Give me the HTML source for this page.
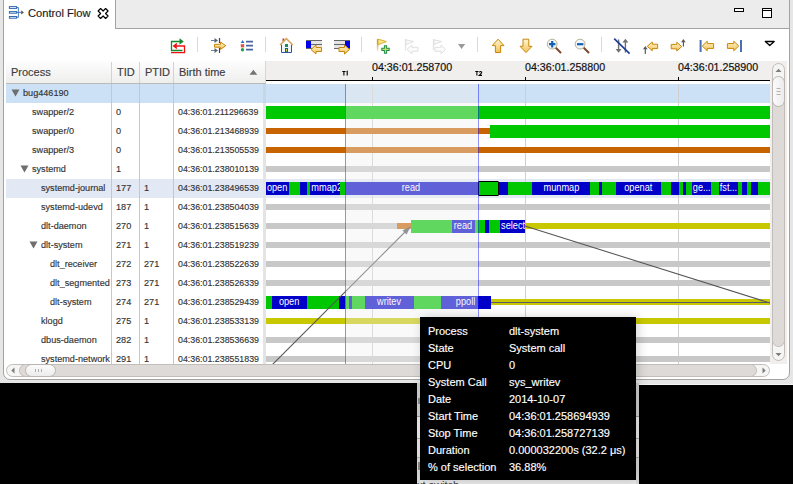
<!DOCTYPE html><html><head><meta charset="utf-8"><style>
html,body{margin:0;padding:0;}
body{width:793px;height:484px;background:#000;position:relative;overflow:hidden;font-family:"Liberation Sans", sans-serif;}
div{position:absolute;box-sizing:border-box;}
.t{white-space:nowrap;line-height:1;}
svg{position:absolute;}
.tc{font-size:9.6px;color:#333;transform-origin:0 0;-webkit-text-stroke:0.15px #333;}
</style></head><body>
<div style="left:0px;top:0px;width:793px;height:383px;background:#e6e6e6;"></div>
<div style="left:417px;top:383px;width:376px;height:2px;background:#e6e6e6;"></div>
<div style="left:639px;top:384px;width:154px;height:1px;background:#f4f4f4;"></div>
<div style="left:3px;top:-4px;width:787px;height:384px;background:#fff;border:1px solid #a3a3a3;border-radius:4px 4px 7px 7px;"></div>
<div style="left:115px;top:-4px;width:675px;height:33px;background:#ececec;border:1px solid #a3a3a3;border-left:1px solid #a3a3a3;border-radius:0 4px 0 0;"></div>
<div style="left:3px;top:-4px;width:113px;height:33px;background:#fff;border:1px solid #a3a3a3;border-bottom:none;border-radius:4px 4px 0 0;"></div>
<svg style="left:8px;top:5px" width="18" height="15" viewBox="0 0 18 15">
<rect x="1.4" y="1.6" width="7.2" height="1.8" fill="#fff" stroke="#2f68b0" stroke-width="1"/>
<rect x="1.4" y="6.6" width="7.2" height="1.6" fill="#fff" stroke="#2f68b0" stroke-width="1"/>
<rect x="1.4" y="11.5" width="7.2" height="1.7" fill="#fff" stroke="#2f68b0" stroke-width="1"/>
<path d="M9 2.5H10.4V12.3H9M9 7.4H13.5" fill="none" stroke="#3a6fb5" stroke-width="0.9"/>
<path d="M13.2 5.3L15.9 7.4L13.2 9.5Z" fill="#555"/>
</svg>
<div class="t" style="left:28px;top:8px;font-size:11.5px;color:#1a1a1a;transform:scaleX(0.97);transform-origin:0 0;-webkit-text-stroke:0.15px #1a1a1a;">Control Flow</div>
<svg style="left:97px;top:7px" width="13" height="13" viewBox="0 -0.5 13 13">
<path d="M8.61 1.01L11.09 3.49L8.57 6.00L11.09 8.51L8.61 10.99L6.10 8.47L3.59 10.99L1.11 8.51L3.63 6.00L1.11 3.49L3.59 1.01L6.10 3.53Z" fill="#fff" stroke="#000" stroke-width="1.15" stroke-linejoin="round"/>
</svg>
<div style="left:734px;top:8px;width:10px;height:4px;border:1.5px solid #000;background:#fff;border-radius:0.5px;"></div>
<div style="left:762px;top:8px;width:10px;height:10px;border:1.5px solid #000;background:#fff;border-radius:0.5px;"></div>
<div style="left:763px;top:10px;width:8px;height:1px;background:#000;"></div>
<div style="left:6px;top:61px;width:260px;height:22px;background:linear-gradient(#fdfdfd,#eeeeed);"></div>
<div style="left:6px;top:83px;width:260px;height:1px;background:#bcbab7;"></div>
<div style="left:265px;top:61px;width:1px;height:22px;background:#d8d6d3;"></div>
<div style="left:111px;top:62px;width:1px;height:21px;background:#d4d2cf;"></div>
<div style="left:139px;top:62px;width:1px;height:21px;background:#d4d2cf;"></div>
<div style="left:173px;top:62px;width:1px;height:21px;background:#d4d2cf;"></div>
<div class="t" style="left:11px;top:67px;font-size:11px;color:#3c3c3c;-webkit-text-stroke:0.15px #3c3c3c;">Process</div>
<div class="t" style="left:117px;top:67px;font-size:11px;color:#3c3c3c;-webkit-text-stroke:0.15px #3c3c3c;">TID</div>
<div class="t" style="left:145px;top:67px;font-size:11px;color:#3c3c3c;-webkit-text-stroke:0.15px #3c3c3c;">PTID</div>
<div class="t" style="left:179px;top:67px;font-size:11px;color:#3c3c3c;-webkit-text-stroke:0.15px #3c3c3c;">Birth time</div>
<svg style="left:248px;top:68px" width="11" height="8" viewBox="248 68 11 8"><path d="M249.5 74.8L253.4 69.8L257.3 74.8Z" fill="#747474"/></svg>
<div style="left:6px;top:84px;width:257px;height:280px;overflow:hidden;">
<div style="left:0px;top:0px;width:257px;height:19px;background:#cce1f6;"></div>
<div style="left:0px;top:95px;width:257px;height:19px;background:#e2e8f4;"></div>
<div style="left:105px;top:0px;width:1px;height:280px;background:#c9c7c4;"></div>
<div style="left:133px;top:0px;width:1px;height:280px;background:#c9c7c4;"></div>
<div style="left:167px;top:0px;width:1px;height:280px;background:#c9c7c4;"></div>
<svg style="left:5px;top:5px" width="9" height="8" viewBox="0 0 9 8"><path d="M0.5 0.5H8.5L4.5 7.5Z" fill="#6e6e6e"/></svg>
<div style="left:17px;top:0px;width:88px;height:19px;overflow:hidden;"><div class="t tc" style="left:0;top:3.7px;transform:scaleX(0.95);">bug446190</div></div>
<div style="left:26px;top:19px;width:79px;height:19px;overflow:hidden;"><div class="t tc" style="left:0;top:3.7px;transform:scaleX(0.95);">swapper/2</div></div>
<div class="t tc" style="left:110px;top:22.7px;transform:scaleX(0.95);">0</div>
<div class="t tc" style="left:172px;top:22.7px;transform:scaleX(0.92);">04:36:01.211296639</div>
<div style="left:26px;top:38px;width:79px;height:19px;overflow:hidden;"><div class="t tc" style="left:0;top:3.7px;transform:scaleX(0.95);">swapper/0</div></div>
<div class="t tc" style="left:110px;top:41.7px;transform:scaleX(0.95);">0</div>
<div class="t tc" style="left:172px;top:41.7px;transform:scaleX(0.92);">04:36:01.213468939</div>
<div style="left:26px;top:57px;width:79px;height:19px;overflow:hidden;"><div class="t tc" style="left:0;top:3.7px;transform:scaleX(0.95);">swapper/3</div></div>
<div class="t tc" style="left:110px;top:60.7px;transform:scaleX(0.95);">0</div>
<div class="t tc" style="left:172px;top:60.7px;transform:scaleX(0.92);">04:36:01.213505539</div>
<svg style="left:14px;top:81px" width="9" height="8" viewBox="0 0 9 8"><path d="M0.5 0.5H8.5L4.5 7.5Z" fill="#6e6e6e"/></svg>
<div style="left:26px;top:76px;width:79px;height:19px;overflow:hidden;"><div class="t tc" style="left:0;top:3.7px;transform:scaleX(0.95);">systemd</div></div>
<div class="t tc" style="left:110px;top:79.7px;transform:scaleX(0.95);">1</div>
<div class="t tc" style="left:172px;top:79.7px;transform:scaleX(0.92);">04:36:01.238010139</div>
<div style="left:35px;top:95px;width:70px;height:19px;overflow:hidden;"><div class="t tc" style="left:0;top:3.7px;transform:scaleX(0.95);">systemd-journal</div></div>
<div class="t tc" style="left:110px;top:98.7px;transform:scaleX(0.95);">177</div>
<div class="t tc" style="left:138px;top:98.7px;transform:scaleX(0.95);">1</div>
<div class="t tc" style="left:172px;top:98.7px;transform:scaleX(0.92);">04:36:01.238496539</div>
<div style="left:35px;top:114px;width:70px;height:19px;overflow:hidden;"><div class="t tc" style="left:0;top:3.7px;transform:scaleX(0.95);">systemd-udevd</div></div>
<div class="t tc" style="left:110px;top:117.7px;transform:scaleX(0.95);">187</div>
<div class="t tc" style="left:138px;top:117.7px;transform:scaleX(0.95);">1</div>
<div class="t tc" style="left:172px;top:117.7px;transform:scaleX(0.92);">04:36:01.238504039</div>
<div style="left:35px;top:133px;width:70px;height:19px;overflow:hidden;"><div class="t tc" style="left:0;top:3.7px;transform:scaleX(0.95);">dlt-daemon</div></div>
<div class="t tc" style="left:110px;top:136.7px;transform:scaleX(0.95);">270</div>
<div class="t tc" style="left:138px;top:136.7px;transform:scaleX(0.95);">1</div>
<div class="t tc" style="left:172px;top:136.7px;transform:scaleX(0.92);">04:36:01.238515639</div>
<svg style="left:23px;top:157px" width="9" height="8" viewBox="0 0 9 8"><path d="M0.5 0.5H8.5L4.5 7.5Z" fill="#6e6e6e"/></svg>
<div style="left:35px;top:152px;width:70px;height:19px;overflow:hidden;"><div class="t tc" style="left:0;top:3.7px;transform:scaleX(0.95);">dlt-system</div></div>
<div class="t tc" style="left:110px;top:155.7px;transform:scaleX(0.95);">271</div>
<div class="t tc" style="left:138px;top:155.7px;transform:scaleX(0.95);">1</div>
<div class="t tc" style="left:172px;top:155.7px;transform:scaleX(0.92);">04:36:01.238519239</div>
<div style="left:44px;top:171px;width:61px;height:19px;overflow:hidden;"><div class="t tc" style="left:0;top:3.7px;transform:scaleX(0.95);">dlt_receiver</div></div>
<div class="t tc" style="left:110px;top:174.7px;transform:scaleX(0.95);">272</div>
<div class="t tc" style="left:138px;top:174.7px;transform:scaleX(0.95);">271</div>
<div class="t tc" style="left:172px;top:174.7px;transform:scaleX(0.92);">04:36:01.238522639</div>
<div style="left:44px;top:190px;width:61px;height:19px;overflow:hidden;"><div class="t tc" style="left:0;top:3.7px;transform:scaleX(0.95);">dlt_segmented</div></div>
<div class="t tc" style="left:110px;top:193.7px;transform:scaleX(0.95);">273</div>
<div class="t tc" style="left:138px;top:193.7px;transform:scaleX(0.95);">271</div>
<div class="t tc" style="left:172px;top:193.7px;transform:scaleX(0.92);">04:36:01.238526339</div>
<div style="left:44px;top:209px;width:61px;height:19px;overflow:hidden;"><div class="t tc" style="left:0;top:3.7px;transform:scaleX(0.95);">dlt-system</div></div>
<div class="t tc" style="left:110px;top:212.7px;transform:scaleX(0.95);">274</div>
<div class="t tc" style="left:138px;top:212.7px;transform:scaleX(0.95);">271</div>
<div class="t tc" style="left:172px;top:212.7px;transform:scaleX(0.92);">04:36:01.238529439</div>
<div style="left:35px;top:228px;width:70px;height:19px;overflow:hidden;"><div class="t tc" style="left:0;top:3.7px;transform:scaleX(0.95);">klogd</div></div>
<div class="t tc" style="left:110px;top:231.7px;transform:scaleX(0.95);">275</div>
<div class="t tc" style="left:138px;top:231.7px;transform:scaleX(0.95);">1</div>
<div class="t tc" style="left:172px;top:231.7px;transform:scaleX(0.92);">04:36:01.238533139</div>
<div style="left:35px;top:247px;width:70px;height:19px;overflow:hidden;"><div class="t tc" style="left:0;top:3.7px;transform:scaleX(0.95);">dbus-daemon</div></div>
<div class="t tc" style="left:110px;top:250.7px;transform:scaleX(0.95);">282</div>
<div class="t tc" style="left:138px;top:250.7px;transform:scaleX(0.95);">1</div>
<div class="t tc" style="left:172px;top:250.7px;transform:scaleX(0.92);">04:36:01.238536639</div>
<div style="left:35px;top:266px;width:70px;height:19px;overflow:hidden;"><div class="t tc" style="left:0;top:3.7px;transform:scaleX(0.95);">systemd-network</div></div>
<div class="t tc" style="left:110px;top:269.7px;transform:scaleX(0.95);">291</div>
<div class="t tc" style="left:138px;top:269.7px;transform:scaleX(0.95);">1</div>
<div class="t tc" style="left:172px;top:269.7px;transform:scaleX(0.92);">04:36:01.238551839</div>
</div>
<div style="left:263px;top:84px;width:3px;height:280px;background:#e4e4e4;"></div>
<div style="left:263px;top:84px;width:3px;height:19px;background:#c6d7e8;"></div>
<svg style="left:0;top:0" width="793" height="60" viewBox="0 0 793 60">
<defs>
<linearGradient id="og" x1="0" y1="0" x2="0" y2="1"><stop offset="0" stop-color="#fff6cf"/><stop offset="1" stop-color="#f2c25a"/></linearGradient>
<linearGradient id="pole" gradientUnits="userSpaceOnUse" x1="0" y1="39" x2="0" y2="51"><stop offset="0" stop-color="#b98a20"/><stop offset="1" stop-color="#efe2b8"/></linearGradient>
<linearGradient id="og2" x1="0" y1="0" x2="1" y2="0"><stop offset="0" stop-color="#fff6cf"/><stop offset="1" stop-color="#f2c25a"/></linearGradient>
</defs>
<g fill="none" stroke="#d9d9d9" stroke-width="1">
<path d="M197.5 37V52M265.5 37V52M361.5 37V52M477.5 37V52M601.5 37V52"/>
</g>
<!-- sync -->
<path d="M182.5 50.5H171.5V41.5H180" fill="none" stroke="#168a2a" stroke-width="1.3"/>
<path d="M179.5 38.3L183.8 41.5L179.5 44.7Z" fill="#168a2a"/>
<path d="M171 52.6H184.5V46H176.5" fill="none" stroke="#f01010" stroke-width="1.3"/>
<path d="M176.8 42.8L172.6 46L176.8 49.2Z" fill="#f01010"/>
<!-- collapse -->
<path d="M211 40.5H216M211 50.5H216" stroke="#5a8ab5" stroke-width="1.2"/>
<path d="M214.5 38L218 40.5L214.5 43Z M214.5 48L218 50.5L214.5 53Z" fill="#5c6470"/>
<path d="M219.5 38V43M219.5 48V53" stroke="#3a4a66" stroke-width="1.2"/>
<path d="M214.5 44.3H220.5V42L225.8 45.7L220.5 49.4V47.2H214.5Z" fill="url(#og)" stroke="#c7860b" stroke-width="1" stroke-linejoin="round"/>
<!-- list -->
<path d="M242.6 40L244.4 43H240.8Z" fill="#2a6ac0"/>
<rect x="240.8" y="44.2" width="3.4" height="3.2" fill="#e05040"/>
<circle cx="242.5" cy="49.8" r="1.7" fill="#2a9a50"/>
<path d="M246 41.6H253M246 45.6H253M246 49.6H253" stroke="#4a64a0" stroke-width="1.6"/>
<!-- home -->
<rect x="282.5" y="38.5" width="1.8" height="3" fill="#c04030"/>
<path d="M281.5 44.5V52.5H291.5V44.5" fill="#eef4fc" stroke="#2d56a8" stroke-width="1"/>
<path d="M280 45L286.4 38.6L292.8 45" fill="none" stroke="#d8a860" stroke-width="1.6"/>
<rect x="285" y="44" width="3" height="3" fill="#1a8a50"/>
<rect x="285" y="48" width="3" height="4.6" fill="#1a5a90"/>
<rect x="286" y="49" width="1" height="2.5" fill="#d0e020"/>
<!-- prev event -->
<rect x="306" y="40" width="16" height="9" fill="#e4e4e4"/>
<path d="M306 40.5H322M306 48.5H322M311 44.5H322" stroke="#666" stroke-width="1"/>
<rect x="306" y="41" width="5" height="7" fill="#0000e8"/>
<path d="M311 49.5L316 45V47.5H321.5V51.5H316V54Z" fill="url(#og)" stroke="#c7860b" stroke-width="1" stroke-linejoin="round"/>
<!-- next event -->
<rect x="334" y="40" width="16" height="9" fill="#e4e4e4"/>
<path d="M334 40.5H350M334 48.5H350M334 44.5H345" stroke="#666" stroke-width="1"/>
<rect x="345" y="41" width="5" height="7" fill="#0000e8"/>
<path d="M349.5 49.5L344.5 45V47.5H339V51.5H344.5V54Z" fill="url(#og)" stroke="#c7860b" stroke-width="1" stroke-linejoin="round"/>
<!-- add bookmark -->
<path d="M377.6 39.2V50.8" stroke="url(#pole)" stroke-width="1.5"/>
<path d="M377.8 39.3L382 40.2L386.3 41.6L382.5 43L378.2 44.6Z" fill="#fbea8a" stroke="#d4a21c" stroke-width="0.9" stroke-linejoin="round"/>
<path d="M385.5 45.3V53.7M381.3 49.4H389.7" stroke="#1f8a4c" stroke-width="3.2"/>
<path d="M385.5 46.3V52.7M382.3 49.4H388.7" stroke="#c6e064" stroke-width="1.3"/>
<!-- prev bookmark (disabled) -->
<path d="M405.5 39V50.5" stroke="#e4e4e4" stroke-width="1.3"/>
<path d="M406 39.8L413.5 41.5L406 44.5Z" fill="#fbfbfb" stroke="#e0e0e0" stroke-width="1" stroke-linejoin="round"/>
<path d="M407 49.3L412 45V47.3H418V51.3H412V53.8Z" fill="#fbfbfb" stroke="#e0e0e0" stroke-width="1" stroke-linejoin="round"/>
<!-- next bookmark (disabled) -->
<path d="M433.5 39V50.5" stroke="#e4e4e4" stroke-width="1.3"/>
<path d="M434 39.8L441.5 41.5L434 44.5Z" fill="#fbfbfb" stroke="#e0e0e0" stroke-width="1" stroke-linejoin="round"/>
<path d="M445.5 49.3L441 45V47.3H435V51.3H441V53.8Z" fill="#fbfbfb" stroke="#e0e0e0" stroke-width="1" stroke-linejoin="round"/>
<path d="M458 44H465.2L461.6 49Z" fill="#9a9a9a"/>
<!-- up / down -->
<path d="M498.1 39.2L504 45.6H500.6V52.5H495.4V45.6H492.2Z" fill="url(#og)" stroke="#c7860b" stroke-width="1" stroke-linejoin="round"/>
<path d="M523 39.2H528.8V46.3H532L526 52.6L520 46.3H523Z" fill="url(#og)" stroke="#c7860b" stroke-width="1" stroke-linejoin="round"/>
<!-- zoom in / out -->
<path d="M556 48L560.5 52.5" stroke="#7a4a30" stroke-width="2" stroke-linecap="round"/>
<circle cx="552.2" cy="44.1" r="4.9" fill="#f4f6fa" stroke="#b8b090" stroke-width="1"/>
<path d="M549 44.2H555.4M552.2 41V47.4" stroke="#1060b8" stroke-width="2.2"/>
<path d="M584 48L588.5 52.5" stroke="#7a4a30" stroke-width="2" stroke-linecap="round"/>
<circle cx="580.1" cy="44.1" r="4.9" fill="#f4f6fa" stroke="#b8b090" stroke-width="1"/>
<path d="M577 44.2H583.4" stroke="#1060b8" stroke-width="2.2"/>
<!-- hide arrows -->
<path d="M618.6 39.5V51M625.4 40.5V52.5" stroke="#707070" stroke-width="1.4"/>
<path d="M615.6 49L621.6 49L618.6 52.8Z M622.4 42.5L628.4 42.5L625.4 38.8Z" fill="#707070"/>
<path d="M614.2 38.6L629.6 53.6" stroke="#1a3a9a" stroke-width="1.6"/>
<!-- follow back -->
<path d="M645.3 48V54" stroke="#5a5a5a" stroke-width="1.2"/>
<path d="M643 49.2H647.6L645.3 46Z" fill="#5a5a5a"/>
<path d="M647.2 46.3L652.3 42V44.2H657.6V48.6H652.3V50.7Z" fill="url(#og)" stroke="#c7860b" stroke-width="1" stroke-linejoin="round"/>
<!-- follow fwd -->
<path d="M683.4 41V46.5" stroke="#5a5a5a" stroke-width="1.2"/>
<path d="M681.1 42.2H685.7L683.4 39Z" fill="#5a5a5a"/>
<path d="M681.7 46.6L676.8 42.2V44.4H671.2V48.8H676.8V51Z" fill="url(#og)" stroke="#c7860b" stroke-width="1" stroke-linejoin="round"/>
<!-- prev state -->
<path d="M700.6 40V52" stroke="#4a72b0" stroke-width="2"/>
<path d="M702.3 46L707.2 41.2V43.6H713.6V48.4H707.2V50.8Z" fill="url(#og)" stroke="#c7860b" stroke-width="1" stroke-linejoin="round"/>
<!-- next state -->
<path d="M741 40V52" stroke="#4a72b0" stroke-width="2"/>
<path d="M738.7 46L733.8 41.2V43.6H727.4V48.4H733.8V50.8Z" fill="url(#og)" stroke="#c7860b" stroke-width="1" stroke-linejoin="round"/>
<!-- view menu -->
<path d="M765.3 41.5H774.2L769.75 45.6Z" fill="#fff" stroke="#000" stroke-width="1.3" stroke-linejoin="round"/>
</svg>
<div style="left:266px;top:61px;width:521px;height:20px;background:#f0efee;"></div>
<div style="left:266px;top:80px;width:504px;height:1px;background:#000;"></div>
<div style="left:266px;top:81px;width:504px;height:3px;background:#fff;"></div>
<div style="left:372px;top:77px;width:1px;height:3px;background:#000;"></div>
<div style="left:525px;top:77px;width:1px;height:3px;background:#000;"></div>
<div style="left:678px;top:77px;width:1px;height:3px;background:#000;"></div>
<div class="t" style="left:372px;top:62px;font-size:11px;color:#111;transform:scaleX(0.97);transform-origin:0 0;-webkit-text-stroke:0.2px #111;">04:36:01.258700</div>
<div class="t" style="left:525px;top:62px;font-size:11px;color:#111;transform:scaleX(0.97);transform-origin:0 0;-webkit-text-stroke:0.2px #111;">04:36:01.258800</div>
<div class="t" style="left:678px;top:62px;font-size:11px;color:#111;transform:scaleX(0.97);transform-origin:0 0;-webkit-text-stroke:0.2px #111;">04:36:01.258900</div>
<svg style="left:340px;top:70px" width="150" height="8" viewBox="340 70 150 8"><path d="M342.3 71.5H345.5M343.9 71.5V75.5M346.5 72.2L347.2 71.5V75.5" fill="none" stroke="#000" stroke-width="1.1"/><path d="M475.3 71.5H478.5M476.9 71.5V75.5M479.3 72.3Q480.5 70.8 481.7 72.2Q481.7 73.2 479.3 75.4H482" fill="none" stroke="#000" stroke-width="1.1"/></svg>
<div style="left:770px;top:81px;width:17px;height:283px;background:#f0efee;"></div>
<div style="left:266px;top:84px;width:504px;height:280px;overflow:hidden;background:#fff;">
<div style="left:0px;top:0px;width:504px;height:19px;background:#cce1f6;"></div>
<div style="left:0px;top:95px;width:504px;height:19px;background:#e2e8f4;"></div>
<div style="left:106px;top:0px;width:1px;height:280px;background:#cfcfcf;"></div>
<div style="left:259px;top:0px;width:1px;height:280px;background:#cfcfcf;"></div>
<div style="left:412px;top:0px;width:1px;height:280px;background:#cfcfcf;"></div>
<div style="left:0px;top:22px;width:504px;height:13px;background:#00c800;"></div>
<div style="left:0px;top:44px;width:224px;height:6px;background:#c86400;"></div>
<div style="left:224px;top:41px;width:280px;height:13px;background:#00c800;"></div>
<div style="left:0px;top:63px;width:504px;height:6px;background:#c86400;"></div>
<div style="left:0px;top:82px;width:504px;height:6px;background:#c8c8c8;"></div>
<div style="left:0px;top:98px;width:23px;height:13px;background:#0000c8;"></div>
<div style="left:23px;top:98px;width:11px;height:13px;background:#00c800;"></div>
<div style="left:34px;top:98px;width:7px;height:13px;background:#0000c8;"></div>
<div style="left:41px;top:98px;width:3px;height:13px;background:#00c800;"></div>
<div style="left:44px;top:98px;width:30px;height:13px;background:#0000c8;"></div>
<div style="left:74px;top:98px;width:5px;height:13px;background:#00c800;"></div>
<div style="left:79px;top:98px;width:133px;height:13px;background:#0000c8;"></div>
<div style="left:212px;top:98px;width:20px;height:13px;background:#00c800;"></div>
<div style="left:232px;top:98px;width:10px;height:13px;background:#0000c8;"></div>
<div style="left:242px;top:98px;width:24px;height:13px;background:#00c800;"></div>
<div style="left:266px;top:98px;width:58px;height:13px;background:#0000c8;"></div>
<div style="left:324px;top:98px;width:9px;height:13px;background:#00c800;"></div>
<div style="left:333px;top:98px;width:3px;height:13px;background:#0000c8;"></div>
<div style="left:336px;top:98px;width:14px;height:13px;background:#00c800;"></div>
<div style="left:350px;top:98px;width:45px;height:13px;background:#0000c8;"></div>
<div style="left:395px;top:98px;width:10px;height:13px;background:#00c800;"></div>
<div style="left:405px;top:98px;width:8px;height:13px;background:#0000c8;"></div>
<div style="left:413px;top:98px;width:4px;height:13px;background:#00c800;"></div>
<div style="left:417px;top:98px;width:3px;height:13px;background:#0000c8;"></div>
<div style="left:420px;top:98px;width:6px;height:13px;background:#00c800;"></div>
<div style="left:426px;top:98px;width:19px;height:13px;background:#0000c8;"></div>
<div style="left:445px;top:98px;width:8px;height:13px;background:#00c800;"></div>
<div style="left:453px;top:98px;width:19px;height:13px;background:#0000c8;"></div>
<div style="left:472px;top:98px;width:4px;height:13px;background:#00c800;"></div>
<div style="left:476px;top:98px;width:5px;height:13px;background:#0000c8;"></div>
<div style="left:481px;top:98px;width:4px;height:13px;background:#00c800;"></div>
<div style="left:485px;top:98px;width:7px;height:13px;background:#0000c8;"></div>
<div style="left:492px;top:98px;width:12px;height:13px;background:#00c800;"></div>
<div style="left:0px;top:120px;width:504px;height:6px;background:#c8c8c8;"></div>
<div style="left:0px;top:139px;width:131px;height:6px;background:#c8c8c8;"></div>
<div style="left:131px;top:139px;width:14px;height:6px;background:#c86400;"></div>
<div style="left:145px;top:136px;width:41px;height:13px;background:#00c800;"></div>
<div style="left:186px;top:136px;width:23px;height:13px;background:#0000c8;"></div>
<div style="left:209px;top:136px;width:10px;height:13px;background:#00c800;"></div>
<div style="left:219px;top:136px;width:4px;height:13px;background:#0000c8;"></div>
<div style="left:223px;top:136px;width:11px;height:13px;background:#00c800;"></div>
<div style="left:234px;top:136px;width:25px;height:13px;background:#0000c8;"></div>
<div style="left:259px;top:139px;width:245px;height:6px;background:#c8c800;"></div>
<div style="left:0px;top:158px;width:504px;height:6px;background:#c8c8c8;"></div>
<div style="left:0px;top:177px;width:504px;height:6px;background:#c8c8c8;"></div>
<div style="left:0px;top:196px;width:504px;height:6px;background:#c8c8c8;"></div>
<div style="left:0px;top:212px;width:6px;height:13px;background:#00c800;"></div>
<div style="left:6px;top:212px;width:35px;height:13px;background:#0000c8;"></div>
<div style="left:41px;top:212px;width:32px;height:13px;background:#00c800;"></div>
<div style="left:73px;top:212px;width:10px;height:13px;background:#0000c8;"></div>
<div style="left:83px;top:212px;width:3px;height:13px;background:#0000c8;"></div>
<div style="left:79px;top:212px;width:4px;height:13px;background:#00c800;"></div>
<div style="left:86px;top:212px;width:13px;height:13px;background:#00c800;"></div>
<div style="left:99px;top:212px;width:49px;height:13px;background:#0000c8;"></div>
<div style="left:148px;top:212px;width:27px;height:13px;background:#00c800;"></div>
<div style="left:175px;top:212px;width:50px;height:13px;background:#0000c8;"></div>
<div style="left:225px;top:215px;width:279px;height:6px;background:#c8c800;"></div>
<div style="left:0px;top:234px;width:504px;height:6px;background:#c8c800;"></div>
<div style="left:0px;top:253px;width:504px;height:6px;background:#c8c8c8;"></div>
<div style="left:0px;top:272px;width:504px;height:6px;background:#c8c8c8;"></div>
<div style="left:0px;top:98px;width:23px;height:13px;overflow:hidden;text-align:center;font-size:10px;line-height:12px;white-space:nowrap;"><span style="display:inline-block;color:#fff;transform:scaleX(0.92);">open</span></div>
<div style="left:44px;top:98px;width:30px;height:13px;overflow:hidden;text-align:center;font-size:10px;line-height:12px;white-space:nowrap;"><span style="display:inline-block;color:#fff;transform:scaleX(0.92);">mmap2</span></div>
<div style="left:79px;top:98px;width:133px;height:13px;overflow:hidden;text-align:center;font-size:10px;line-height:12px;white-space:nowrap;"><span style="display:inline-block;color:#fff;transform:scaleX(0.92);">read</span></div>
<div style="left:266px;top:98px;width:58px;height:13px;overflow:hidden;text-align:center;font-size:10px;line-height:12px;white-space:nowrap;"><span style="display:inline-block;color:#fff;transform:scaleX(0.92);">munmap</span></div>
<div style="left:350px;top:98px;width:45px;height:13px;overflow:hidden;text-align:center;font-size:10px;line-height:12px;white-space:nowrap;"><span style="display:inline-block;color:#fff;transform:scaleX(0.92);">openat</span></div>
<div style="left:426px;top:98px;width:19px;height:13px;overflow:hidden;text-align:center;font-size:10px;line-height:12px;white-space:nowrap;"><span style="display:inline-block;color:#fff;transform:scaleX(0.92);">ge...</span></div>
<div style="left:453px;top:98px;width:19px;height:13px;overflow:hidden;text-align:center;font-size:10px;line-height:12px;white-space:nowrap;"><span style="display:inline-block;color:#fff;transform:scaleX(0.92);">fst...</span></div>
<div style="left:186px;top:136px;width:23px;height:13px;overflow:hidden;text-align:center;font-size:10px;line-height:12px;white-space:nowrap;"><span style="display:inline-block;color:#fff;transform:scaleX(0.92);">read</span></div>
<div style="left:234px;top:136px;width:25px;height:13px;overflow:hidden;text-align:center;font-size:10px;line-height:12px;white-space:nowrap;"><span style="display:inline-block;color:#fff;transform:scaleX(0.92);">select</span></div>
<div style="left:6px;top:212px;width:35px;height:13px;overflow:hidden;text-align:center;font-size:10px;line-height:12px;white-space:nowrap;"><span style="display:inline-block;color:#fff;transform:scaleX(0.92);">open</span></div>
<div style="left:99px;top:212px;width:49px;height:13px;overflow:hidden;text-align:center;font-size:10px;line-height:12px;white-space:nowrap;"><span style="display:inline-block;color:#fff;transform:scaleX(0.92);">writev</span></div>
<div style="left:175px;top:212px;width:50px;height:13px;overflow:hidden;text-align:center;font-size:10px;line-height:12px;white-space:nowrap;"><span style="display:inline-block;color:#fff;transform:scaleX(0.92);">ppoll</span></div>
<svg style="left:0;top:0" width="504" height="280" viewBox="266 84 504 280"><path d="M262 375L408 229" stroke="#555" stroke-width="1.1"/><path d="M411 226L402.5 230.5L406.5 234.5Z" fill="#555"/><path d="M525 226L780 306.2" stroke="#555" stroke-width="1.05"/><path d="M491 302.5H780" stroke="#5a5a66" stroke-width="1.05"/></svg>
<div style="left:212px;top:97px;width:21px;height:15px;background:transparent;border:1.2px solid #000;border-radius:1px;"></div>
<div style="left:79px;top:0px;width:133px;height:280px;background:rgba(240,240,240,0.4);"></div>
<div style="left:79px;top:0px;width:1px;height:280px;background:rgba(20,20,255,0.47);"></div>
<div style="left:212px;top:0px;width:1px;height:280px;background:rgba(20,20,255,0.47);"></div>
</div>
<div style="left:772px;top:63px;width:13px;height:298px;background:#f5f5f4;border:1px solid #c2bdb9;border-radius:6.5px;"></div>
<div style="left:772px;top:80px;width:13px;height:267px;background:#dddad7;border:1px solid #c2bdb9;border-radius:6.5px;"></div>
<div style="left:772px;top:76px;width:13px;height:31px;background:linear-gradient(90deg,#fbfbfb,#ececec);border:1px solid #bab5b1;border-radius:6.5px;"></div>
<svg style="left:770px;top:60px" width="20" height="305" viewBox="770 60 20 305"><path d="M775.5 72H781.5L778.5 68.8Z" fill="#7c7c7c"/><path d="M775.5 353H781.5L778.5 356.2Z" fill="#7c7c7c"/><path d="M776.5 88.5H780.5M776.5 91.5H780.5M776.5 94.5H780.5" stroke="#b0aca8" stroke-width="0.9"/></svg>
<div style="left:6px;top:364px;width:764px;height:13px;background:#f5f5f4;border:1px solid #c2bdb9;border-radius:6.5px;"></div>
<div style="left:19px;top:364px;width:738px;height:13px;background:#dddad7;border:1px solid #c2bdb9;border-radius:6.5px;"></div>
<div style="left:25px;top:364px;width:31px;height:13px;background:linear-gradient(#fbfbfb,#ececec);border:1px solid #bab5b1;border-radius:6.5px;"></div>
<svg style="left:0px;top:360px" width="793" height="20" viewBox="0 360 793 20"><path d="M14.5 367.5V373.5L11.3 370.5Z" fill="#7c7c7c"/><path d="M762.5 367.5V373.5L765.7 370.5Z" fill="#7c7c7c"/><path d="M35.5 369V372M38.5 369V372M41.5 369V372" stroke="#aaa6a2" stroke-width="0.9"/></svg>
<div style="left:417px;top:383px;width:222px;height:101px;background:#e9e9e9;"></div>
<div style="left:417px;top:383px;width:3px;height:101px;background:linear-gradient(#cfcfcf 0,#cfcfcf 33px,#9a9a9a 33px,#9a9a9a 34px,#ebebeb 34px,#ebebeb 55px,#a8a8a8 55px,#a8a8a8 56px,#e6e6e6 56px,#e6e6e6 74px,#b0b0b0 74px,#b0b0b0 75px,#dadada 75px);"></div>
<div style="left:636px;top:383px;width:3px;height:101px;background:linear-gradient(#cfcfcf 0,#cfcfcf 33px,#9a9a9a 33px,#9a9a9a 34px,#ebebeb 34px,#ebebeb 55px,#a8a8a8 55px,#a8a8a8 56px,#e6e6e6 56px,#e6e6e6 74px,#b0b0b0 74px,#b0b0b0 75px,#dadada 75px);"></div>
<div style="left:418px;top:398px;width:2px;height:6px;background:#8a8a90;"></div>
<div style="left:418px;top:462px;width:2px;height:8px;background:#8f8a80;"></div>
<div style="left:417px;top:481px;width:222px;height:3px;overflow:hidden;"><div class="t" style="left:0;top:-1px;font-size:11px;color:#444;">xt switch</div></div>
<div style="left:420px;top:317px;width:216px;height:163px;background:#000;box-shadow:2px 0 10px rgba(0,0,0,0.18);"></div>
<div class="t" style="left:428px;top:326px;font-size:11px;color:#fff;-webkit-text-stroke:0.15px #fff;">Process</div>
<div class="t" style="left:509px;top:326px;font-size:11px;color:#fff;-webkit-text-stroke:0.15px #fff;">dlt-system</div>
<div class="t" style="left:428px;top:343px;font-size:11px;color:#fff;-webkit-text-stroke:0.15px #fff;">State</div>
<div class="t" style="left:509px;top:343px;font-size:11px;color:#fff;-webkit-text-stroke:0.15px #fff;">System call</div>
<div class="t" style="left:428px;top:360px;font-size:11px;color:#fff;-webkit-text-stroke:0.15px #fff;">CPU</div>
<div class="t" style="left:509px;top:360px;font-size:11px;color:#fff;-webkit-text-stroke:0.15px #fff;">0</div>
<div class="t" style="left:428px;top:377px;font-size:11px;color:#fff;-webkit-text-stroke:0.15px #fff;">System Call</div>
<div class="t" style="left:509px;top:377px;font-size:11px;color:#fff;-webkit-text-stroke:0.15px #fff;">sys_writev</div>
<div class="t" style="left:428px;top:394px;font-size:11px;color:#fff;-webkit-text-stroke:0.15px #fff;">Date</div>
<div class="t" style="left:509px;top:394px;font-size:11px;color:#fff;-webkit-text-stroke:0.15px #fff;">2014-10-07</div>
<div class="t" style="left:428px;top:411px;font-size:11px;color:#fff;-webkit-text-stroke:0.15px #fff;">Start Time</div>
<div class="t" style="left:509px;top:411px;font-size:11px;color:#fff;-webkit-text-stroke:0.15px #fff;">04:36:01.258694939</div>
<div class="t" style="left:428px;top:428px;font-size:11px;color:#fff;-webkit-text-stroke:0.15px #fff;">Stop Time</div>
<div class="t" style="left:509px;top:428px;font-size:11px;color:#fff;-webkit-text-stroke:0.15px #fff;">04:36:01.258727139</div>
<div class="t" style="left:428px;top:445px;font-size:11px;color:#fff;-webkit-text-stroke:0.15px #fff;">Duration</div>
<div class="t" style="left:509px;top:445px;font-size:11px;color:#fff;-webkit-text-stroke:0.15px #fff;">0.000032200s (32.2 μs)</div>
<div class="t" style="left:428px;top:462px;font-size:11px;color:#fff;-webkit-text-stroke:0.15px #fff;">% of selection</div>
<div class="t" style="left:509px;top:462px;font-size:11px;color:#fff;-webkit-text-stroke:0.15px #fff;">36.88%</div></body></html>
